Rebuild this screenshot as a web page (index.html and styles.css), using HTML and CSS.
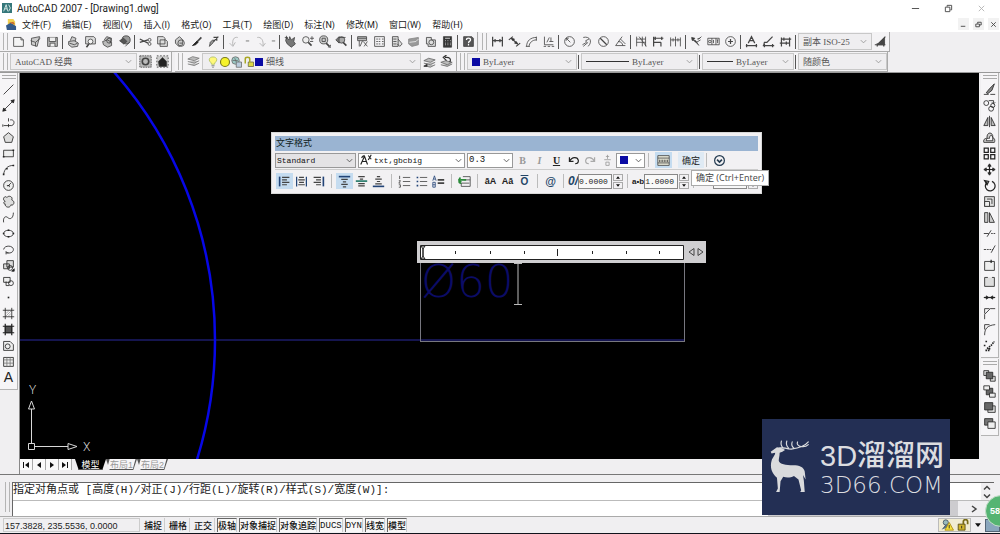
FILE: index.html
```html
<!DOCTYPE html>
<html lang="zh-CN">
<head>
<meta charset="utf-8">
<title>AutoCAD 2007 - [Drawing1.dwg]</title>
<link rel="stylesheet" href="styles.css">
</head>
<body>
<svg class="defs" aria-hidden="true">
<symbol id="new" viewBox="0 0 16 16"><path d="M2 3h9l3 3v8H2zM11 3v3h3" fill="#f4f4f4"/></symbol>
<symbol id="open" viewBox="0 0 16 16"><path d="M3 4l10-2-3 12-7-2z" fill="#ccc"/><path d="M2 7l6 2 6-5M8 9v5"/></symbol>
<symbol id="save" viewBox="0 0 16 16"><path d="M2 3h12v11H2z" fill="#bbb"/><path d="M4 3v5h8V3M5 14v-4h6v4" fill="#eee"/></symbol>
<symbol id="print" viewBox="0 0 16 16"><path d="M4 7l2-5 5 2-1 4M2 8l7-1 5 3-1 4-7 1-4-3z" fill="#ccc"/><path d="M3 10l6 2 4-2"/></symbol>
<symbol id="preview" viewBox="0 0 16 16"><path d="M2 2h10l2 2v7H2z" fill="#ddd"/><circle cx="8" cy="8" r="3" fill="#f4f4f4"/><path d="M6 11l-3 4" stroke-width="2"/></symbol>
<symbol id="publish" viewBox="0 0 16 16"><path d="M4 6l3-4 6 2-2 6M2 8l6-2 5 3v4l-5 2-5-3z" fill="#bbb"/><circle cx="10" cy="7" r="3"/></symbol>
<symbol id="globe" viewBox="0 0 16 16"><circle cx="10" cy="6" r="5" fill="#999"/><path d="M2 7l5-3 4 4-4 3zM9 14l5-5" fill="#555"/></symbol>
<symbol id="cut" viewBox="0 0 16 16"><path d="M1 5l10 5M1 9l10-3" stroke-width="1.5"/><circle cx="13" cy="6" r="1.8"/><circle cx="13" cy="11" r="1.8"/></symbol>
<symbol id="copy" viewBox="0 0 16 16"><path d="M2 2h7l2 2v7H2zM5 6h7l2 2v6H5z" fill="#ddd"/></symbol>
<symbol id="paste" viewBox="0 0 16 16"><path d="M3 6l5-4 4 4v6l-5 2-4-4z" fill="#ccc"/><circle cx="10" cy="10" r="4"/><path d="M8 10h4"/></symbol>
<symbol id="brush" viewBox="0 0 16 16"><path d="M14 3L8 9" stroke-width="2"/><path d="M8 8l-5 5 4-1 3-3z" fill="#222" stroke="#222"/></symbol>
<symbol id="paint" viewBox="0 0 16 16"><path d="M9 7l-2 3-4 4 1-5 3-3z" fill="#999"/><path d="M14 2L8 8M8 3h4v4" stroke-width="1.5"/></symbol>
<symbol id="undo" viewBox="0 0 16 16"><path d="M12 3C7 2 5 6 6 13M2 10l4 4 3-5" stroke="#aaa"/></symbol>
<symbol id="redo" viewBox="0 0 16 16"><path d="M4 3c5-1 8 4 7 10M7 10l4 4 3-4" stroke="#aaa"/></symbol>
<symbol id="dash" viewBox="0 0 16 16"><path d="M5 7h6" stroke="#888" stroke-width="2"/></symbol>
<symbol id="pan" viewBox="0 0 16 16"><path d="M3 3l3 3 1-4 2 4 4-3-1 5 2 3-5 4-5-4-2-4z" fill="#777"/><path d="M1 3h4M3 1v4"/></symbol>
<symbol id="zoom" viewBox="0 0 16 16"><circle cx="6" cy="6" r="4" fill="#eee"/><path d="M9 9l4 4" stroke-width="2"/><path d="M11 4h5M13.500 1.500v5M11 8h4"/></symbol>
<symbol id="zoomw" viewBox="0 0 16 16"><circle cx="7" cy="6" r="5" fill="#ccc"/><path d="M10 10l4 4" stroke-width="2"/><path d="M5 4h4v4H5zM13 15h3v-3z"/></symbol>
<symbol id="zoomp" viewBox="0 0 16 16"><circle cx="8" cy="6" r="4" fill="#aaa"/><path d="M10 9l4 4" stroke-width="2"/><path d="M1 6l4-4v8zM5 3h8" fill="#777"/></symbol>
<symbol id="prop" viewBox="0 0 16 16"><path d="M2 2h11v5H2zM4 7v7M8 7l-3 7M9 8l5 6M14 8l-4 6" fill="#bbb"/><path d="M2 4h11"/></symbol>
<symbol id="dc" viewBox="0 0 16 16"><path d="M2 2h12v12H2z"/><path d="M4 5h2M7 5h2M11 5h2M4 8h2M7 8h2M11 8h2M4 11h2M7 11h2M11 11h2"/></symbol>
<symbol id="tool" viewBox="0 0 16 16"><path d="M3 2h7v12H3zM10 5l5 6-3 3-3-3" fill="#ddd"/><path d="M4 5h4M4 8h4M4 11h4"/></symbol>
<symbol id="sheet" viewBox="0 0 16 16"><path d="M2 5l12-2v9l-8 2-4-3z" fill="#999" stroke="#888"/><path d="M3 9l8-1 3-3" stroke="#eee"/></symbol>
<symbol id="markup" viewBox="0 0 16 16"><path d="M3 3h6v3h5v8H5v-3H3z" fill="#ddd"/><circle cx="9" cy="9" r="3"/></symbol>
<symbol id="calc" viewBox="0 0 16 16"><path d="M3 2h10v13H3z" fill="#333"/><path d="M5 4h6M5 7h1M8 7h1M11 7h1M5 10h1M8 10h1M11 10h1M5 12h1M8 12h1M11 12h1" stroke="#eee"/></symbol>
<symbol id="help" viewBox="0 0 16 16"><path d="M2 2h10l2 2v10H2z" fill="#555"/><path d="M5.500 6c0-3 5-3 5 0 0 2-2.500 1-2.500 4M8 11v2" stroke="#fff" stroke-width="1.500"/></symbol>
<symbol id="dlin" viewBox="0 0 16 16"><path d="M2 2v12M14 2v12" stroke-width="1.500"/><path d="M2 7h12M5 5v4M11 5v4" stroke-width="1.500"/></symbol>
<symbol id="dali" viewBox="0 0 16 16"><path d="M4 4l8 7M1 6l5-4M10 14l5-4" stroke-width="1.500"/><path d="M4 4l4 1-2 2zM12 11l-4-1 2-2z" fill="#222"/></symbol>
<symbol id="darc" viewBox="0 0 16 16"><path d="M2 14C2 7 7 3 14 3M5 14c0-4 4-8 9-8M1 14h5M14 2v5"/></symbol>
<symbol id="dord" viewBox="0 0 16 16"><path d="M3 2v10h11M6 9l3-6M9 8h5M2 14h3M7 14h3M12 14h3M11 3v5"/></symbol>
<symbol id="drad" viewBox="0 0 16 16"><circle cx="8" cy="8" r="6"/><path d="M4 4l5 5M4 4h3M4 4v3"/></symbol>
<symbol id="djog" viewBox="0 0 16 16"><path d="M4 3c8-2 12 5 6 11M3 12l5-3-1-2 4-2M4 14l6-5"/></symbol>
<symbol id="ddia" viewBox="0 0 16 16"><circle cx="8" cy="8" r="6"/><path d="M4 4l8 8" stroke-width="1.500"/></symbol>
<symbol id="dang" viewBox="0 0 16 16"><path d="M10 2L2 13h12M5 8c4 0 5 2 6 5M8 5l6 6"/></symbol>
<symbol id="dq" viewBox="0 0 16 16"><path d="M2 2v12M2 5h11M5 2l9 12M9 2v12M13 2v12M2 9h11"/></symbol>
<symbol id="dbas" viewBox="0 0 16 16"><path d="M2 2v12M2 4h12M2 9h9M11 9v5M4 2v4M12 2v4" stroke-width="1.500"/></symbol>
<symbol id="dcon" viewBox="0 0 16 16"><path d="M2 3v11M8 2v12M14 3v11M2 6h12M5 4v4M11 4v4"/></symbol>
<symbol id="dlead" viewBox="0 0 16 16"><path d="M2 5l5 2 4 6M2 3l4 1-3 3zM9 5h2l3-3M8 9l5-3" fill="#333"/></symbol>
<symbol id="dtol" viewBox="0 0 16 16"><path d="M1 4h14v8H1zM6 4v8M11 4v8M12 6h2M13 6v4"/><circle cx="3.500" cy="8" r="1.500"/><path d="M8 6v4"/></symbol>
<symbol id="dcen" viewBox="0 0 16 16"><circle cx="8" cy="8" r="6"/><path d="M5 8h6M8 5v6" stroke-width="1.500"/></symbol>
<symbol id="dedit" viewBox="0 0 16 16"><path d="M4 10l4-8 4 8M6 7h4M1 13h14M2 11v4M14 11v4" stroke-width="1.500"/></symbol>
<symbol id="dted" viewBox="0 0 16 16"><path d="M13 2L6 9H3l-1 4M1 13h14M3 11v4M13 11v4" stroke-width="1.500"/></symbol>
<symbol id="dupd" viewBox="0 0 16 16"><path d="M3 3v11M13 3v11M3 5h12M1 10h12M6 3v4M9 8v4" stroke-width="1.500"/></symbol>
<symbol id="dsty" viewBox="0 0 16 16"><path d="M14 2L5 11M1 12h13M4 10v4M12 9v5" stroke-width="1.500"/><path d="M9 7l4-4v9H5z" fill="#444"/></symbol>
<symbol id="gear" viewBox="0 0 16 16"><path d="M1 1h14v14H1z" stroke-dasharray="2 1" fill="#bbb"/><circle cx="8" cy="8" r="4" stroke-width="2"/></symbol>
<symbol id="home" viewBox="0 0 16 16"><path d="M1 1h14v14H1z" stroke-dasharray="2 2" fill="#ccc"/><path d="M3 8l5-5 5 5v6H4z" fill="#222"/></symbol>
<symbol id="layers" viewBox="0 0 16 16"><path d="M1 5l6-3 8 2-6 3zM1 8l8 2 6-3M1 11l8 2 6-3" fill="#bbb" stroke="#777"/></symbol>
<symbol id="layerb" viewBox="0 0 16 16"><path d="M1 7l6-3 8 2-6 3zM1 10l8 2 6-3M1 13l8 2 6-3" stroke="#666" fill="#bbb"/><path d="M1 14h4v-3z" fill="#222"/></symbol>
<symbol id="layerp" viewBox="0 0 16 16"><path d="M1 9l6-2 8 2-6 3zM1 12l8 2 6-3" stroke="#666" fill="#bbb"/><path d="M12 9c2-4 0-7-6-6M8 0L4 3l4 4" stroke="#333" stroke-width="1.500"/></symbol>
<symbol id="bulb" viewBox="0 0 16 16"><path d="M6 11c0-3-3-3-3-6 0-5 10-5 10 0 0 3-3 3-3 6z" fill="#fff87a" stroke="#ab5"/><path d="M6 13h4M7 15h2"/></symbol>
<symbol id="sun" viewBox="0 0 16 16"><circle cx="8" cy="8" r="6" fill="#f6f32a" stroke="#7a7a20" stroke-width="1.500"/></symbol>
<symbol id="freeze" viewBox="0 0 16 16"><circle cx="6" cy="6" r="5" fill="#9cc8c4"/><path d="M7 8h7v7H7z" fill="#bcd"/><path d="M5 3l2 5M2 6h7"/></symbol>
<symbol id="lock" viewBox="0 0 16 16"><path d="M7 8h7v6H7z" fill="#dcd944" stroke="#664"/><path d="M9 8V4c0-3-6-3-6 0v6" stroke="#a9a726" stroke-width="2"/></symbol>
<symbol id="line" viewBox="0 0 16 16"><path d="M2 14L14 2"/></symbol>
<symbol id="xline" viewBox="0 0 16 16"><path d="M1 15L15 1M1 15l1-4 3 3zM15 1l-4 1 3 3z" fill="#222"/></symbol>
<symbol id="pline" viewBox="0 0 16 16"><path d="M2 13h10c4-1 4-8-2-7M1 11.500v3M8 4v4M8 11v4"/></symbol>
<symbol id="poly" viewBox="0 0 16 16"><path d="M8 2l6 5-2 7H4L2 7z" fill="#ddd"/></symbol>
<symbol id="rect" viewBox="0 0 16 16"><path d="M2 4h12v8H2z" fill="#eee"/><path d="M1 12h2M13 4h2" stroke-width="2"/></symbol>
<symbol id="arc" viewBox="0 0 16 16"><path d="M2 14C3 7 7 3 14 3"/><path d="M1 14h2M5 7h2M13 3h2" stroke-width="2"/></symbol>
<symbol id="circ" viewBox="0 0 16 16"><circle cx="8" cy="8" r="6" fill="#eee"/><path d="M7 9l4-4M6 8h3v2"/></symbol>
<symbol id="cloud" viewBox="0 0 16 16"><path d="M4 8C-1 5 4 0 6 3c2-3 8-1 6 3 5 2 2 8-1 6-1 5-8 3-7-1-3 0-2-3 0-3z" fill="#ddd"/></symbol>
<symbol id="spline" viewBox="0 0 16 16"><path d="M2 14c-1-7 3-8 5-6 3 3 7 1 7-6"/></symbol>
<symbol id="ellipse" viewBox="0 0 16 16"><ellipse cx="8" cy="8" rx="6" ry="4"/><path d="M1 8h2M13 8h2M8 3v2M8 11v2" stroke-width="2"/></symbol>
<symbol id="earc" viewBox="0 0 16 16"><path d="M2 8c1-6 12-5 12 0 0 4-5 5-8 4M5 10v4M5 12h3"/></symbol>
<symbol id="insert" viewBox="0 0 16 16"><path d="M6 2h8v8H6zM2 6h7v6H2z" fill="#ddd"/><circle cx="10" cy="11" r="3" /><path d="M12 15h3v-3z" fill="#222"/></symbol>
<symbol id="block" viewBox="0 0 16 16"><path d="M2 3h8v6H2z" fill="#eee"/><circle cx="11" cy="10" r="3"/><path d="M5 8v5h4"/></symbol>
<symbol id="point" viewBox="0 0 16 16"><path d="M7 7h2v2H7z" fill="#222" stroke="none"/></symbol>
<symbol id="hatch" viewBox="0 0 16 16"><path d="M4 1v14M12 1v14M1 4h14M1 12h14" /><path d="M5 8l3-3M5 11l6-6M8 11l3-3" stroke="#999"/></symbol>
<symbol id="grad" viewBox="0 0 16 16"><path d="M4 4h8v8H4z" fill="#555"/><path d="M4 1v14M12 1v14M1 4h14M1 12h14" stroke-width="1.500" stroke="#222"/></symbol>
<symbol id="region" viewBox="0 0 16 16"><path d="M2 3h8l4 4v7H2z" fill="#eee"/><circle cx="7" cy="9" r="3"/></symbol>
<symbol id="table" viewBox="0 0 16 16"><path d="M2 3h12v11H2z" fill="#eee"/><path d="M2 6h12M6 3v11M10 3v11M2 10h12" stroke="#777"/></symbol>
<symbol id="erase" viewBox="0 0 16 16"><path d="M14 1L8 7l-4 5 2 1 5-4z" fill="#888"/><path d="M1 14h6M9 14h6"/></symbol>
<symbol id="cobj" viewBox="0 0 16 16"><circle cx="4" cy="5" r="3"/><circle cx="10" cy="12" r="3"/><circle cx="12" cy="8" r="2.500"/><path d="M7 2h6v3M11 4l2 2 2-2"/></symbol>
<symbol id="mirror" viewBox="0 0 16 16"><path d="M6 3v10H1zM10 3v10h5z" fill="#bbb"/><path d="M8 1v14"/></symbol>
<symbol id="offset" viewBox="0 0 16 16"><path d="M1 14c-1-5 3-5 4-5-1-9 8-8 7-1 4 2 2 6 2 6zM4 12h8V8c-1-4-4-3-4 1-2 0-4 0-4 3z" fill="#ccc"/></symbol>
<symbol id="array" viewBox="0 0 16 16"><path d="M1.500 1.500h5v5h-5zM9.500 1.500h5v5h-5zM1.500 9.500h5v5h-5zM9.500 9.500h5v5h-5z" stroke-width="1.500"/></symbol>
<symbol id="move" viewBox="0 0 16 16"><path d="M8 2v12M2 8h12" stroke-width="1.500"/><path d="M8 1l2 3H6zM8 15l-2-3h4zM1 8l3-2v4zM15 8l-3 2V6z" fill="#333"/></symbol>
<symbol id="rotate" viewBox="0 0 16 16"><path d="M5 4a6 6 0 1 0 6-1M2 2l5 1-2 4z" stroke-width="1.500" fill="none"/></symbol>
<symbol id="scale" viewBox="0 0 16 16"><path d="M2 2h12v12H2z" fill="#ddd"/><path d="M2 8h6v6H2zM5 5h6v6" fill="#eee"/></symbol>
<symbol id="stretch" viewBox="0 0 16 16"><path d="M2 2h4v12H2zM8 2l6 12H8z" fill="#ccc"/></symbol>
<symbol id="trim" viewBox="0 0 16 16"><path d="M1 8h6M5 12l5-8"/><path d="M10 8h6" stroke-dasharray="2 1"/></symbol>
<symbol id="extend" viewBox="0 0 16 16"><path d="M1 8h3M10 12l5-9"/><path d="M5 8h7" stroke-dasharray="2 1"/></symbol>
<symbol id="brkpt" viewBox="0 0 16 16"><path d="M2 3h12v11H2z" fill="#eee"/><path d="M10 1v4" stroke-width="1.500"/></symbol>
<symbol id="brk" viewBox="0 0 16 16"><path d="M6 3H2v11h12V3h-3" fill="#ddd"/></symbol>
<symbol id="join" viewBox="0 0 16 16"><path d="M1 8h14" stroke-width="1.500"/><path d="M4 6l3 2-3 2zM12 6L9 8l3 2z" fill="#222"/></symbol>
<symbol id="chamfer" viewBox="0 0 16 16"><path d="M2 15V9l7-7h6M2 2v6M2 2h6"/></symbol>
<symbol id="fillet" viewBox="0 0 16 16"><path d="M2 15C2 7 5 3 15 2M2 2v6M2 2h6"/></symbol>
<symbol id="explode" viewBox="0 0 16 16"><path d="M3 3h3M2 7v3M5 12l5-4 4-5M3 14h5v-3" stroke-dasharray="2 1" stroke-width="2"/></symbol>
<symbol id="front" viewBox="0 0 16 16"><path d="M1 2h6v6H1zM9 9h6v6H9z" fill="#ddd"/><path d="M4 4h8v8H4z" fill="#666"/></symbol>
<symbol id="back" viewBox="0 0 16 16"><path d="M4 4h8v8H4z" fill="#666"/><path d="M1 1h7v5H1zM8 10h7v5H8z" fill="#eee"/></symbol>
<symbol id="above" viewBox="0 0 16 16"><path d="M6 6h9v8H6z" fill="#ddd"/><path d="M2 2h10v9H2z" fill="#666"/></symbol>
<symbol id="under" viewBox="0 0 16 16"><path d="M2 2h10v8H2z" fill="#777"/><path d="M6 6h9v8H6z" fill="#eee"/></symbol>
<symbol id="chev" viewBox="0 0 10 10"><path d="M2 3.500l3 3 3-3"/></symbol>
<symbol id="al" viewBox="0 0 16 16"><path d="M2 2v12" stroke="#247" stroke-width="2"/><path d="M5 3h9M5 6h6M5 9h9M5 12h6" stroke-width="1.500"/></symbol>
<symbol id="ac" viewBox="0 0 16 16"><path d="M2 2v12M14 2v12" stroke="#247" stroke-width="1.500"/><path d="M5 3h6M4 6h8M5 9h6M4 12h8" stroke-width="1.500"/></symbol>
<symbol id="ar" viewBox="0 0 16 16"><path d="M14 2v12" stroke="#247" stroke-width="2"/><path d="M2 3h9M5 6h6M2 9h9M5 12h6" stroke-width="1.500"/></symbol>
<symbol id="vt" viewBox="0 0 16 16"><path d="M1 2h14" stroke="#247" stroke-width="2"/><path d="M4 5.500h8M6 8.500h4M4 11.500h8M6 14.500h4" stroke-width="1.500"/></symbol>
<symbol id="vm" viewBox="0 0 16 16"><path d="M1 7.500h14" stroke="#276" stroke-width="2"/><path d="M4 2h8M6 5h4M4 10.500h8M4 13.500h8" stroke-width="1.500"/></symbol>
<symbol id="vb" viewBox="0 0 16 16"><path d="M1 14h14" stroke="#247" stroke-width="2"/><path d="M6 2h4M4 5h8M6 8h4M4 11h8" stroke-width="1.500"/></symbol>
<symbol id="num" viewBox="0 0 16 16"><path d="M6 3h9M6 8h9M6 13h9M2 1v4M1 7h2l-2 3h2M1 12h2v3H1"/></symbol>
<symbol id="bul" viewBox="0 0 16 16"><path d="M6 3h9M6 8h9M6 13h9"/><path d="M2 3h2M2 8h2M2 13h2" stroke="#247" stroke-width="2"/></symbol>
<symbol id="upl" viewBox="0 0 16 16"><path d="M1 7l2-6 2 6M2 5h2M1 9h3v6H1zM1 12h3" stroke="#247"/><path d="M7 6h8M7 10h8" stroke-width="2"/></symbol>
<symbol id="field" viewBox="0 0 16 16"><path d="M6 2h9v12H4v-4h10M7 6h8" /><path d="M10 6H4C0 6 1 11 4 10M3 3L1 6l3 3" stroke="#2a8a3a" stroke-width="2"/></symbol>
<symbol id="und2" viewBox="0 0 16 16"><path d="M3 4v5h5M3 9c3-6 10-6 11-1 0 3-2 4-4 4" stroke="#222" stroke-width="1.500"/></symbol>
<symbol id="red2" viewBox="0 0 16 16"><path d="M13 4v5H8M13 9C10 3 3 3 2 8c0 3 2 4 4 4" stroke="#aaa" stroke-width="1.500"/></symbol>
<symbol id="stack" viewBox="0 0 16 16"><path d="M4 7h8M8 1v5M6 3h4M6 10h4v4H6z" stroke="#999"/></symbol>
<symbol id="rul" viewBox="0 0 16 16"><path d="M1 2h14v12H1z" fill="#e8e8d8"/><path d="M1 5h14M1 11h14M3 7v3M5 7v3M7 7v3M9 7v3M11 7v3M13 7v3"/></symbol>
<symbol id="opt" viewBox="0 0 16 16"><circle cx="8" cy="8" r="6" stroke="#233a50" stroke-width="1.500"/><path d="M5 7l3 3 3-3" stroke="#233a50" stroke-width="2"/></symbol>
<symbol id="txtf" viewBox="0 0 16 16"><path d="M1 14L6 3l4 11M3 10h6M11 2l4 5M15 1l-4 7M2 5l3-3" stroke="#222" stroke-width="1.500"/></symbol>
</svg>

<header class="titlebar">
<svg class="appicon" viewBox="0 0 12 12" aria-hidden="true"><path d="M0 0h12v12H0z" fill="#35777a"/><path d="M2 10l3-8 2 8M3 7h3M8 2l2 4-2 4" stroke="#e8f4f0" fill="none"/></svg>
<h1>AutoCAD 2007 - [Drawing1.dwg]</h1>
<div class="winbtns">
<button aria-label="最小化"><svg viewBox="0 0 10 10"><path d="M1 5h8"/></svg></button>
<button aria-label="还原"><svg viewBox="0 0 10 10"><path d="M1.500 3.500h5v5h-5zM3.500 3V1.500h5v5H7"/></svg></button>
<button class="faint" aria-label="关闭"><svg viewBox="0 0 10 10"><path d="M2 2l6 6M8 2L2 8"/></svg></button>
</div>
</header>
<nav class="menubar">
<svg class="docicon" viewBox="0 0 12 12" aria-hidden="true"><path d="M2 0h6l2 3v6H2z" fill="#f0d050"/><path d="M0 7l5-3 6 4v4H1z" fill="#345a8a"/><path d="M3 4l5-1 2 3" fill="#c86a30"/></svg>
<button>文件(F)</button><button>编辑(E)</button><button>视图(V)</button><button>插入(I)</button><button>格式(O)</button><button>工具(T)</button><button>绘图(D)</button><button>标注(N)</button><button>修改(M)</button><button>窗口(W)</button><button>帮助(H)</button>
<div class="docbtns">
<button aria-label="最小化文档"><svg viewBox="0 0 10 10"><path d="M2 7h5"/></svg></button>
<button aria-label="还原文档"><svg viewBox="0 0 10 10"><path d="M2 4.500h4v3H2zM4 4V2.500h4v3H6"/></svg></button>
<button aria-label="关闭文档"><svg viewBox="0 0 10 10"><path d="M2.500 2.500l5 5M7.500 2.500l-5 5"/></svg></button>
</div>
</nav>

<div class="toolbars">
<div class="barrow">
<div class="toolbar" role="toolbar" aria-label="标准"><i class="grip"></i>
<button class="b" aria-label="新建"><svg><use href="#new"/></svg></button><button class="b" aria-label="打开"><svg><use href="#open"/></svg></button><button class="b" aria-label="保存"><svg><use href="#save"/></svg></button><i class="sep"></i>
<button class="b" aria-label="打印"><svg><use href="#print"/></svg></button><button class="b" aria-label="打印预览"><svg><use href="#preview"/></svg></button><button class="b" aria-label="发布"><svg><use href="#publish"/></svg></button><button class="b" aria-label="三维 DWF"><svg><use href="#globe"/></svg></button><i class="sep"></i>
<button class="b" aria-label="剪切"><svg><use href="#cut"/></svg></button><button class="b" aria-label="复制"><svg><use href="#copy"/></svg></button><button class="b" aria-label="粘贴"><svg><use href="#paste"/></svg></button><button class="b" aria-label="特性匹配"><svg><use href="#brush"/></svg></button><button class="b" aria-label="块编辑器"><svg><use href="#paint"/></svg></button><i class="sep"></i>
<button class="b" aria-label="放弃"><svg><use href="#undo"/></svg></button><button class="b narrow" aria-label="放弃列表"><svg><use href="#dash"/></svg></button><button class="b" aria-label="重做"><svg><use href="#redo"/></svg></button><button class="b narrow" aria-label="重做列表"><svg><use href="#dash"/></svg></button><i class="sep"></i>
<button class="b" aria-label="实时平移"><svg><use href="#pan"/></svg></button><button class="b" aria-label="实时缩放"><svg><use href="#zoom"/></svg></button><button class="b" aria-label="窗口缩放"><svg><use href="#zoomw"/></svg></button><button class="b" aria-label="缩放上一个"><svg><use href="#zoomp"/></svg></button><i class="sep"></i>
<button class="b" aria-label="特性"><svg><use href="#prop"/></svg></button><button class="b" aria-label="设计中心"><svg><use href="#dc"/></svg></button><button class="b" aria-label="工具选项板"><svg><use href="#tool"/></svg></button><button class="b" aria-label="图纸集"><svg><use href="#sheet"/></svg></button><button class="b" aria-label="标记集"><svg><use href="#markup"/></svg></button><button class="b" aria-label="计算器"><svg><use href="#calc"/></svg></button><i class="sep"></i>
<button class="b" aria-label="帮助"><svg><use href="#help"/></svg></button>
</div>
<div class="toolbar dims" role="toolbar" aria-label="标注"><i class="grip"></i>
<button class="b" aria-label="线性"><svg><use href="#dlin"/></svg></button><button class="b" aria-label="对齐"><svg><use href="#dali"/></svg></button><button class="b" aria-label="弧长"><svg><use href="#darc"/></svg></button><button class="b" aria-label="坐标"><svg><use href="#dord"/></svg></button><i class="sep"></i>
<button class="b" aria-label="半径"><svg><use href="#drad"/></svg></button><button class="b" aria-label="折弯"><svg><use href="#djog"/></svg></button><button class="b" aria-label="直径"><svg><use href="#ddia"/></svg></button><button class="b" aria-label="角度"><svg><use href="#dang"/></svg></button><i class="sep"></i>
<button class="b" aria-label="快速标注"><svg><use href="#dq"/></svg></button><button class="b" aria-label="基线"><svg><use href="#dbas"/></svg></button><button class="b" aria-label="连续"><svg><use href="#dcon"/></svg></button><i class="sep"></i>
<button class="b" aria-label="快速引线"><svg><use href="#dlead"/></svg></button><button class="b" aria-label="公差"><svg><use href="#dtol"/></svg></button><button class="b" aria-label="圆心标记"><svg><use href="#dcen"/></svg></button><i class="sep"></i>
<button class="b" aria-label="编辑标注"><svg><use href="#dedit"/></svg></button><button class="b" aria-label="编辑标注文字"><svg><use href="#dted"/></svg></button><button class="b" aria-label="标注更新"><svg><use href="#dupd"/></svg></button><i class="sep"></i>
<label class="combo w-dim"><select aria-label="标注样式"><option>副本 ISO-25</option></select><svg><use href="#chev"/></svg></label><button class="b" aria-label="标注样式"><svg><use href="#dsty"/></svg></button>
</div>
</div>
<div class="barrow">
<div class="toolbar space" role="toolbar" aria-label="工作空间"><i class="grip"></i>
<label class="combo w-space"><select aria-label="工作空间"><option>AutoCAD 经典</option></select><svg><use href="#chev"/></svg></label><button class="b" aria-label="工作空间设置"><svg><use href="#gear"/></svg></button><button class="b" aria-label="我的工作空间"><svg><use href="#home"/></svg></button>
</div>
<div class="toolbar layer" role="toolbar" aria-label="图层"><i class="grip"></i>
<button class="b" aria-label="图层特性"><svg><use href="#layers"/></svg></button>
<label class="combo w-layer"><svg class="st"><use href="#bulb"/></svg><svg class="st"><use href="#sun"/></svg><svg class="st"><use href="#freeze"/></svg><svg class="st"><use href="#lock"/></svg><i class="swatch"></i><select aria-label="图层"><option>细线</option></select><svg><use href="#chev"/></svg></label>
<button class="b" aria-label="置为当前图层"><svg><use href="#layerb"/></svg></button><button class="b" aria-label="上一个图层"><svg><use href="#layerp"/></svg></button>
</div>
<div class="toolbar props" role="toolbar" aria-label="特性"><i class="grip"></i>
<label class="combo w-color"><i class="swatch"></i><select aria-label="颜色"><option>ByLayer</option></select><svg><use href="#chev"/></svg></label><i class="sep"></i>
<label class="combo w-type"><i class="rule long"></i><select aria-label="线型"><option>ByLayer</option></select><svg><use href="#chev"/></svg></label><i class="sep"></i>
<label class="combo w-weight"><i class="rule"></i><select aria-label="线宽"><option>ByLayer</option></select><svg><use href="#chev"/></svg></label><i class="sep"></i>
<label class="combo w-plot"><select aria-label="打印样式"><option>随颜色</option></select><svg><use href="#chev"/></svg></label>
</div>
</div>
</div>

<main class="workspace">
<div class="side left"><div class="palette" role="toolbar" aria-label="绘图"><i class="vgrip"></i>
<button class="b" aria-label="直线"><svg><use href="#line"/></svg></button><button class="b" aria-label="构造线"><svg><use href="#xline"/></svg></button><button class="b" aria-label="多段线"><svg><use href="#pline"/></svg></button><button class="b" aria-label="正多边形"><svg><use href="#poly"/></svg></button><button class="b" aria-label="矩形"><svg><use href="#rect"/></svg></button><button class="b" aria-label="圆弧"><svg><use href="#arc"/></svg></button><button class="b" aria-label="圆"><svg><use href="#circ"/></svg></button><button class="b" aria-label="修订云线"><svg><use href="#cloud"/></svg></button><button class="b" aria-label="样条曲线"><svg><use href="#spline"/></svg></button><button class="b" aria-label="椭圆"><svg><use href="#ellipse"/></svg></button><button class="b" aria-label="椭圆弧"><svg><use href="#earc"/></svg></button><button class="b" aria-label="插入块"><svg><use href="#insert"/></svg></button><button class="b" aria-label="创建块"><svg><use href="#block"/></svg></button><button class="b" aria-label="点"><svg><use href="#point"/></svg></button><button class="b" aria-label="图案填充"><svg><use href="#hatch"/></svg></button><button class="b" aria-label="渐变色"><svg><use href="#grad"/></svg></button><button class="b" aria-label="面域"><svg><use href="#region"/></svg></button><button class="b" aria-label="表格"><svg><use href="#table"/></svg></button><button class="b letter">A</button>
</div></div>

<div class="center">
<section class="canvas">
<svg class="drawing" aria-hidden="true">
<path d="M0 267h400" stroke="#15154f" stroke-width="2"/>
<path d="M400 267h265" stroke="#15154f" stroke-width="2"/>
<circle cx="-211" cy="267" r="406" stroke="#0707e6" stroke-width="2.500"/>
<g stroke="#d8d8d8"><path d="M8.500 370.500h6v6h-6zM11.500 370v-34M15 373.500h33M11.500 328l-3 8h6zM57 373.500l-9-3v6z"/></g>
<text x="9" y="321">Y</text><text x="63" y="378">X</text>
</svg>

<div class="mtext">
<div class="ruler"><svg class="rulerface" aria-hidden="true"><path d="M.5.5h263v14H.5z" fill="#fff"/><path d="M35.500 6v3M70.500 6v3M104.500 6v3M137.500 4v7M172.500 6v3M206.500 6v3M239.500 6v3"/><path d="M1 1h4L3 4v7l2 3H1l2-3V4z" fill="#ddd"/></svg><svg class="arrows" viewBox="0 0 16 10" aria-hidden="true"><path d="M6 1.500v7L1 5zM10 1.500v7L15 5z"/></svg></div>
<div class="textframe" contenteditable="true" role="textbox" aria-label="多行文字"><span>Ø60</span><svg class="caret" viewBox="0 0 8 42" aria-hidden="true"><path d="M0 .5h8M0 41.500h8M4 1v40"/></svg></div>
</div>

<section class="editor" aria-label="文字格式">
<h2>文字格式</h2>
<div class="erow">
<label class="combo e-style"><select aria-label="文字样式"><option>Standard</option></select><svg><use href="#chev"/></svg></label>
<label class="combo e-font"><svg class="st"><use href="#txtf"/></svg><select aria-label="字体"><option>txt,gbcbig</option></select><svg><use href="#chev"/></svg></label>
<label class="combo e-size"><select aria-label="文字高度"><option>0.3</option></select><svg><use href="#chev"/></svg></label>
<button class="b serif dim">B</button><button class="b serif dim"><em>I</em></button><button class="b serif"><u>U</u></button><button class="b" aria-label="放弃"><svg><use href="#und2"/></svg></button><button class="b" aria-label="重做"><svg><use href="#red2"/></svg></button><button class="b" aria-label="堆叠"><svg><use href="#stack"/></svg></button>
<label class="combo e-color"><i class="swatch"></i><select aria-label="文字颜色"><option></option></select><svg><use href="#chev"/></svg></label><i class="sep"></i>
<button class="b on" aria-label="标尺"><svg><use href="#rul"/></svg></button><button class="ok">确定</button><i class="sep"></i><button class="b more" aria-label="选项"><svg><use href="#opt"/></svg></button>
</div>
<div class="erow second">
<button class="b on" aria-label="左对齐"><svg><use href="#al"/></svg></button><button class="b" aria-label="居中对齐"><svg><use href="#ac"/></svg></button><button class="b" aria-label="右对齐"><svg><use href="#ar"/></svg></button><i class="sep"></i>
<button class="b on" aria-label="上对齐"><svg><use href="#vt"/></svg></button><button class="b" aria-label="中央对齐"><svg><use href="#vm"/></svg></button><button class="b" aria-label="下对齐"><svg><use href="#vb"/></svg></button><i class="sep"></i>
<button class="b" aria-label="编号"><svg><use href="#num"/></svg></button><button class="b" aria-label="项目符号"><svg><use href="#bul"/></svg></button><button class="b" aria-label="大写字母"><svg><use href="#upl"/></svg></button><i class="sep"></i>
<button class="b" aria-label="插入字段"><svg><use href="#field"/></svg></button><i class="sep"></i>
<button class="b case">āA</button><button class="b case">Aā</button><button class="b over">O</button><i class="sep"></i>
<button class="b at">@</button><i class="sep"></i>
<label class="num"><span class="slant">0/</span><input aria-label="倾斜角度" value="0.0000"><span class="spin"><button aria-label="增加倾斜"><svg viewBox="0 0 6 4"><path d="M3 0l3 4H0z"/></svg></button><button aria-label="减少倾斜"><svg viewBox="0 0 6 4"><path d="M3 4l3-4H0z"/></svg></button></span></label><i class="sep"></i>
<label class="num"><span class="track">a•b</span><input aria-label="追踪" value="1.0000"><span class="spin"><button aria-label="增加追踪"><svg viewBox="0 0 6 4"><path d="M3 0l3 4H0z"/></svg></button><button aria-label="减少追踪"><svg viewBox="0 0 6 4"><path d="M3 4l3-4H0z"/></svg></button></span></label><i class="sep"></i>
<label class="num last"><input aria-label="宽度比例"><span class="spin"><button aria-label="增加宽度"><svg viewBox="0 0 6 4"><path d="M3 0l3 4H0z"/></svg></button><button aria-label="减少宽度"><svg viewBox="0 0 6 4"><path d="M3 4l3-4H0z"/></svg></button></span></label>
</div>
<div class="tip" role="tooltip">确定 (Ctrl+Enter)</div>
</section>
</section>
<div class="tabs">
<button class="nav" aria-label="第一个"><svg viewBox="0 0 10 10"><path d="M2 2h1v6H2zM8 2v6L4 5z"/></svg></button><button class="nav" aria-label="上一个"><svg viewBox="0 0 10 10"><path d="M7 2v6L3 5z"/></svg></button><button class="nav" aria-label="下一个"><svg viewBox="0 0 10 10"><path d="M3 2v6l4-3z"/></svg></button><button class="nav" aria-label="最后一个"><svg viewBox="0 0 10 10"><path d="M7 2h1v6H7zM2 2v6l4-3z"/></svg></button>
<button class="tab active">模型</button><button class="tab">布局1</button><button class="tab">布局2</button>
</div>
</div>

<div class="side right">
<div class="palette" role="toolbar" aria-label="修改"><i class="vgrip"></i>
<button class="b" aria-label="删除"><svg><use href="#erase"/></svg></button><button class="b" aria-label="复制"><svg><use href="#cobj"/></svg></button><button class="b" aria-label="镜像"><svg><use href="#mirror"/></svg></button><button class="b" aria-label="偏移"><svg><use href="#offset"/></svg></button><button class="b" aria-label="阵列"><svg><use href="#array"/></svg></button><button class="b" aria-label="移动"><svg><use href="#move"/></svg></button><button class="b" aria-label="旋转"><svg><use href="#rotate"/></svg></button><button class="b" aria-label="缩放"><svg><use href="#scale"/></svg></button><button class="b" aria-label="拉伸"><svg><use href="#stretch"/></svg></button><button class="b" aria-label="修剪"><svg><use href="#trim"/></svg></button><button class="b" aria-label="延伸"><svg><use href="#extend"/></svg></button><button class="b" aria-label="打断于点"><svg><use href="#brkpt"/></svg></button><button class="b" aria-label="打断"><svg><use href="#brk"/></svg></button><button class="b" aria-label="合并"><svg><use href="#join"/></svg></button><button class="b" aria-label="倒角"><svg><use href="#chamfer"/></svg></button><button class="b" aria-label="圆角"><svg><use href="#fillet"/></svg></button><button class="b" aria-label="分解"><svg><use href="#explode"/></svg></button>
</div>
<div class="palette" role="toolbar" aria-label="绘图次序"><i class="vgrip"></i>
<button class="b" aria-label="前置"><svg><use href="#front"/></svg></button><button class="b" aria-label="后置"><svg><use href="#back"/></svg></button><button class="b" aria-label="置于对象之上"><svg><use href="#above"/></svg></button><button class="b" aria-label="置于对象之下"><svg><use href="#under"/></svg></button>
</div>
</div>
</main>

<section class="command" aria-label="命令行">
<i class="grip"></i>
<div class="cmdbox">
<div class="history"><p>指定对角点或 [高度(H)/对正(J)/行距(L)/旋转(R)/样式(S)/宽度(W)]:</p><div class="vscroll"><svg viewBox="0 0 10 6"><path d="M2 4.500l3-3 3 3"/></svg><svg viewBox="0 0 10 6"><path d="M2 1.500l3 3 3-3"/></svg></div></div>
<div class="entry"><input aria-label="命令"><div class="hscroll"><i class="thumb"></i><svg viewBox="0 0 10 10"><path d="M3 2l4 3-4 3"/></svg></div></div>
</div>
</section>
<footer class="status">
<output class="coords">157.3828, 235.5536, 0.0000</output>
<div class="modes"><button>捕捉</button><button>栅格</button><button>正交</button><button class="down">极轴</button><button class="down">对象捕捉</button><button class="down">对象追踪</button><button class="down">DUCS</button><button class="down">DYN</button><button class="down">线宽</button><button class="down">模型</button></div>
<div class="tray"><div class="traybox">
<svg viewBox="0 0 14 14" aria-hidden="true"><circle cx="5" cy="4" r="3" fill="#9bb" stroke="#456"/><path d="M1 12l4-5 3 3" fill="#578" stroke="#456"/><path d="M9 4l5 9H4z" fill="#f6e23a" stroke="#aa8a10"/><path d="M9 7v4" stroke="#222"/></svg>
<svg viewBox="0 0 14 14" aria-hidden="true"><path d="M2 6h8v7H2z" fill="#cfb42c" stroke="#554a10"/><path d="M8 6V3c0-3 5-3 5 0v3" fill="none" stroke="#776a18" stroke-width="2"/><path d="M6 8v3" stroke="#222"/></svg></div>
<svg class="more" viewBox="0 0 8 5" aria-hidden="true"><path d="M0 0h8L4 5z"/></svg><i class="corner"></i></div>
</footer>

<aside class="brand" aria-label="3D溜溜网">
<svg class="deer" viewBox="0 0 48 60" aria-hidden="true"><path d="M3 13l7-5 6 1 3 2-3 2-3 1c0 4-1 6-1 9 1 4 8 5 16 5 7 0 12 2 13 7l1 9-3-5 1 6 1 13h-5l1-2-3-12-5-4c-4 2-8 2-12 1l-3 5-1 12h-4l2-4-1-12c-6-5-8-12-6-19 1-4 4-6 4-9l-4 1z" fill="#d9dadc"/><path d="M12 9c5-2 7 1 14 1 8-1 15-3 19-8M17 9c-3-3-3-5-2-8M23 9c-3-3-3-5-2-8M29 9c-3-2-3-4-2-7M36 7c-3-1-4-3-3-5M36 7c4 1 7 0 9-2" fill="none" stroke="#d9dadc" stroke-width="1.300" stroke-linecap="round"/></svg>
<div class="brandtext"><strong>3D溜溜网</strong><span>3D66.COM</span></div>
</aside>
<button class="bubble">58</button>
</body>
</html>
```
FILE: styles.css
```css
* { box-sizing: border-box; }
body {
  position: relative;
  display: flex;
  flex-direction: column;
  height: 100vh;
  margin: 0;
  overflow: hidden;
  background: #f0eff1;
  color: #222;
  font-family: "Liberation Sans", "Noto Sans CJK SC", sans-serif;
  font-size: 9px;
  border-bottom: 1px solid #10131c;
}
.defs { position: absolute; width: 0; height: 0; }
button, select, input { font: inherit; color: inherit; margin: 0; padding: 0; border: 0; background: none; border-radius: 0; }
button { display: flex; align-items: center; justify-content: center; white-space: nowrap; }
h1, h2, p { margin: 0; font-weight: 400; }
svg { fill: none; stroke: #444; flex: none; }

.titlebar { display: flex; align-items: center; height: 16px; padding-left: 2px; gap: 5px; background: #fff; }
.titlebar h1 { flex: 1; font-family: Roboto, sans-serif; font-size: 10px; }
.appicon { width: 10px; height: 10px; stroke: none; }
.winbtns { display: flex; gap: 24px; padding-right: 14px; }
.winbtns svg { width: 9px; height: 9px; display: block; }
.faint { opacity: .4; }
.menubar { display: flex; align-items: center; height: 16px; padding-left: 6px; gap: 11px; background: #fff; font-family: Roboto, "Noto Sans CJK SC", sans-serif; }
.docicon { width: 11px; height: 11px; stroke: none; margin-right: -6px; }
.docbtns { display: flex; gap: 4px; margin-left: auto; padding-right: 1px; }
.docbtns button { width: 11px; height: 12px; background: #f2f2f2; }
.docbtns svg { width: 9px; height: 9px; }

.toolbars { display: flex; flex-direction: column; background: #f0eff1; border-bottom: 1px solid #999; }
.barrow { display: flex; height: 20px; }
.toolbar { display: flex; align-items: center; border: solid #aaa; border-width: 0 1px 1px 0; padding-left: 3px; background: #f4f3f5; }
.dims { margin-left: 1px; }
.grip { width: 5px; height: 17px; border: solid #b4b4b4; border-width: 0 1px; margin-right: 2px; flex: none; }
.sep { width: 1px; height: 14px; margin: 0 2px 0 1px; background: #555; flex: none; }
.b { width: 17px; height: 17px; flex: none; }
.b svg { width: 13px; height: 13px; }
.narrow { width: 9px; }
.narrow svg { width: 9px; height: 9px; }
.combo { display: flex; align-items: center; height: 17px; padding: 0 3px 0 4px; border: 1px solid #c8c8c8; background: #efeef0; color: #555; font-family: "Liberation Serif", "Noto Sans CJK SC", serif; }
.combo select { appearance: none; flex: 1; min-width: 0; height: 14px; opacity: 1; }
.combo svg { width: 9px; height: 9px; stroke: #999; }
.combo .st { width: 12px; height: 12px; stroke: #666; }
.swatch { width: 8px; height: 8px; margin-right: 3px; background: #0b0ba4; flex: none; }
.rule { width: 26px; height: 1px; margin-right: 3px; background: #333; flex: none; }
.rule.long { width: 43px; }
.w-dim { width: 74px; }
.w-space { width: 127px; }
.w-layer { width: 219px; }
.w-color { width: 110px; }
.w-type { width: 117px; }
.w-weight { width: 92px; }
.w-plot { width: 89px; }
.layer { padding-right: 1px; margin-left: 3px; }

.workspace { display: flex; flex: 1; min-height: 0; }
.side { width: 20px; flex: none; border-right: 1px solid #888; }
.side.right { width: 21px; border: 0; padding-left: 2px; }
.palette { display: flex; flex-direction: column; align-items: center; width: 18px; padding: 2px 0 4px; border: solid #b4b4b4; border-width: 0 1px 1px 0; background: #f6f5f7; }
.palette .b { height: 16px; }
.palette .b svg { width: 13px; height: 13px; stroke: #222; }
.palette + .palette { margin-top: 1px; }
.vgrip { width: 14px; height: 4px; border: solid #aaa; border-width: 1px 0; margin-bottom: 2px; flex: none; }
.letter { font-size: 14px; }

.center { display: flex; flex-direction: column; flex: 1; min-width: 0; }
.canvas { position: relative; flex: 1; min-height: 0; background: #000; overflow: hidden; }
.drawing { position: absolute; inset: 0; width: 100%; height: 100%; }
.drawing text { fill: #d8d8d8; stroke: none; font: 300 12px Roboto, sans-serif; }

.mtext { position: absolute; left: 397px; top: 168px; width: 289px; }
.ruler { display: flex; align-items: center; height: 22px; padding-left: 3px; gap: 4px; background: #cfced0; }
.rulerface { width: 264px; height: 15px; stroke: #222; }
.arrows { width: 16px; height: 10px; }
.textframe { display: flex; width: 265px; height: 79px; margin-left: 3px; border: solid #77777f; border-width: 0 1px 1px; color: #0c0c66; font-family: "DejaVu Sans", sans-serif; font-weight: 200; font-size: 45px; line-height: 38px; outline: 0; }
.caret { width: 8px; height: 42px; stroke: #bbb; }

.editor { position: absolute; left: 251px; top: 59px; width: 491px; padding: 3px 3px 1px; border: 1px solid #d8d8d8; background: #f2f1f3; }
.editor h2 { height: 15px; padding-left: 1px; font-size: 9px; line-height: 15px; background: #9ab4d2; color: #122; }
.erow { display: flex; align-items: center; height: 18px; }
.erow.second { height: 23px; padding-left: 1px; border-top: 1px solid #ccc; }
.erow .combo { height: 15px; margin-right: 2px; padding: 0 1px; background: #fff; border-color: #999; color: #111; font-family: "Liberation Mono", monospace; font-size: 8px; }
.erow .combo svg { stroke: #555; }
.erow .e-style { width: 81px; background: #e4e3e5; }
.erow .e-font { width: 107px; }
.e-font select { padding-left: 2px; }
.erow .e-size { width: 46px; margin-right: 1px; font-size: 9px; }
.erow .e-color { width: 29px; padding-left: 3px; }
.erow .sep { background: #bbb; margin: 0 4px; }
.erow .e-color + .sep { margin-left: 1px; margin-right: 6px; }
.erow .b { height: 16px; }
.on { background: #c5dcf0; }
.serif { font-family: "Liberation Serif", serif; font-size: 10px; font-weight: 700; }
.dim { color: #999; }
.ok { width: 26px; height: 16px; margin-left: 6px; background: #dfeaf4; }
.erow .ok + .sep { margin-left: 2px; }
.case { font-size: 9px; font-weight: 700; }
.over { font-weight: 700; font-size: 10px; text-decoration: overline; color: #246; }
.at { font-size: 11px; font-weight: 700; color: #246; }
.num { display: flex; align-items: center; }
.num input { width: 34px; height: 15px; border: 1px solid #888; background: #f8f8f8; font-family: "Liberation Mono", monospace; font-size: 8px; }
.slant { font: italic 700 12px "Liberation Sans", sans-serif; color: #246; }
.track { font-size: 8px; font-weight: 700; }
.spin { display: flex; flex-direction: column; gap: 1px; margin-left: 1px; }
.spin button { width: 10px; height: 7px; border: 1px solid #aaa; }
.spin svg { width: 4px; height: 3px; fill: #111; stroke: none; }
.last { margin-left: auto; }
.tip { position: absolute; left: 419px; top: 37px; height: 16px; padding: 0 4px; border: 1px solid #aaa; background: #fff; color: #444; font-family: "Open Sans", "Noto Sans CJK SC", sans-serif; line-height: 14px; white-space: nowrap; }

.tabs { display: flex; height: 15px; padding-bottom: 4px; }
.nav { width: 13px; border-right: 1px solid #aaa; background: #fafafa; }
.nav svg { width: 10px; height: 10px; fill: #111; stroke: none; }
.tab { width: 31px; color: #999; border-bottom: 1px solid #555; clip-path: polygon(0 0, 100% 0, 88% 100%, 12% 100%); background: linear-gradient(105deg, #555 0 3px, #f6f5f7 4px 28px, #555 29px); }
.tab.active { margin-left: 3px; background: #000; color: #fff; }

.command { display: flex; height: 42px; padding: 7px 6px 0 5px; border-top: 1px solid #777; }
.command .grip { height: 30px; margin-right: 2px; }
.cmdbox { flex: 1; display: flex; flex-direction: column; background: #fff; border: solid #666; border-width: 1px 0 0 1px; }
.history { display: flex; justify-content: space-between; height: 18px; border-bottom: 1px solid #bbb; }
.history p { font: 11px/15px "Liberation Mono", "Noto Sans CJK SC", monospace; white-space: nowrap; }
.vscroll { display: flex; flex-direction: column; justify-content: center; gap: 2px; width: 13px; background: #f0eff1; }
.vscroll svg { width: 12px; height: 6px; stroke-width: 1.5; }
.entry { display: flex; flex: 1; }
.entry input { flex: 1; min-width: 0; outline: 0; }
.hscroll { display: flex; align-items: center; justify-content: space-between; width: 23%; padding-right: 15px; background: #f0eff1; }
.thumb { width: 90%; height: 100%; background: #cdcccf; }
.hscroll svg { width: 10px; height: 10px; stroke-width: 1.5; }

.status { display: flex; align-items: center; height: 17px; padding-left: 3px; border-top: 1px solid #aaa; }
.coords { width: 137px; height: 14px; padding-left: 1px; line-height: 14px; border: 1px solid #ccc; }
.modes { display: flex; gap: 2px; padding-left: 2px; color: #111; font-family: "Liberation Mono", "Noto Sans CJK SC", monospace; font-weight: 500; }
.modes button { height: 14px; padding: 0 2px; }
.modes button:not(.down) { border-right: 1px solid #ccc; }
.modes .down { padding: 0; border: solid #666; border-width: 1px 0 0 1px; border-right: 1px solid #ccc; background: #f8f8f8; }
.tray { display: flex; align-items: center; gap: 4px; margin-left: auto; }
.traybox { display: flex; align-items: center; gap: 2px; width: 33px; height: 14px; padding-left: 2px; border: 1px solid #bbb; background: #f1ecd2; }
.traybox svg { width: 13px; height: 12px; stroke: none; }
.tray .more { width: 6px; height: 4px; fill: #111; stroke: none; }
.corner { width: 15px; height: 13px; background: #8aa6bd; border: 1px solid #567; }

.brand { position: absolute; right: 50px; bottom: 18px; display: flex; align-items: center; gap: 9px; width: 188px; height: 96px; padding-left: 6px; background: #232f54; color: #dcdde0; }
.deer { width: 43px; height: 58px; stroke: none; }
.brandtext { display: flex; flex-direction: column; white-space: nowrap; }
.brandtext strong { font: 500 29px/36px "Liberation Sans", "Noto Sans CJK SC", sans-serif; }
.brandtext span { font: 200 23px/22px "DejaVu Sans", sans-serif; }
.bubble { position: absolute; right: -17px; bottom: 6px; width: 32px; height: 32px; justify-content: flex-start; padding-left: 4px; border: 1px solid #c5ddc9; border-radius: 50%; background: #55b472; color: #fff; font-weight: 700; }
```
